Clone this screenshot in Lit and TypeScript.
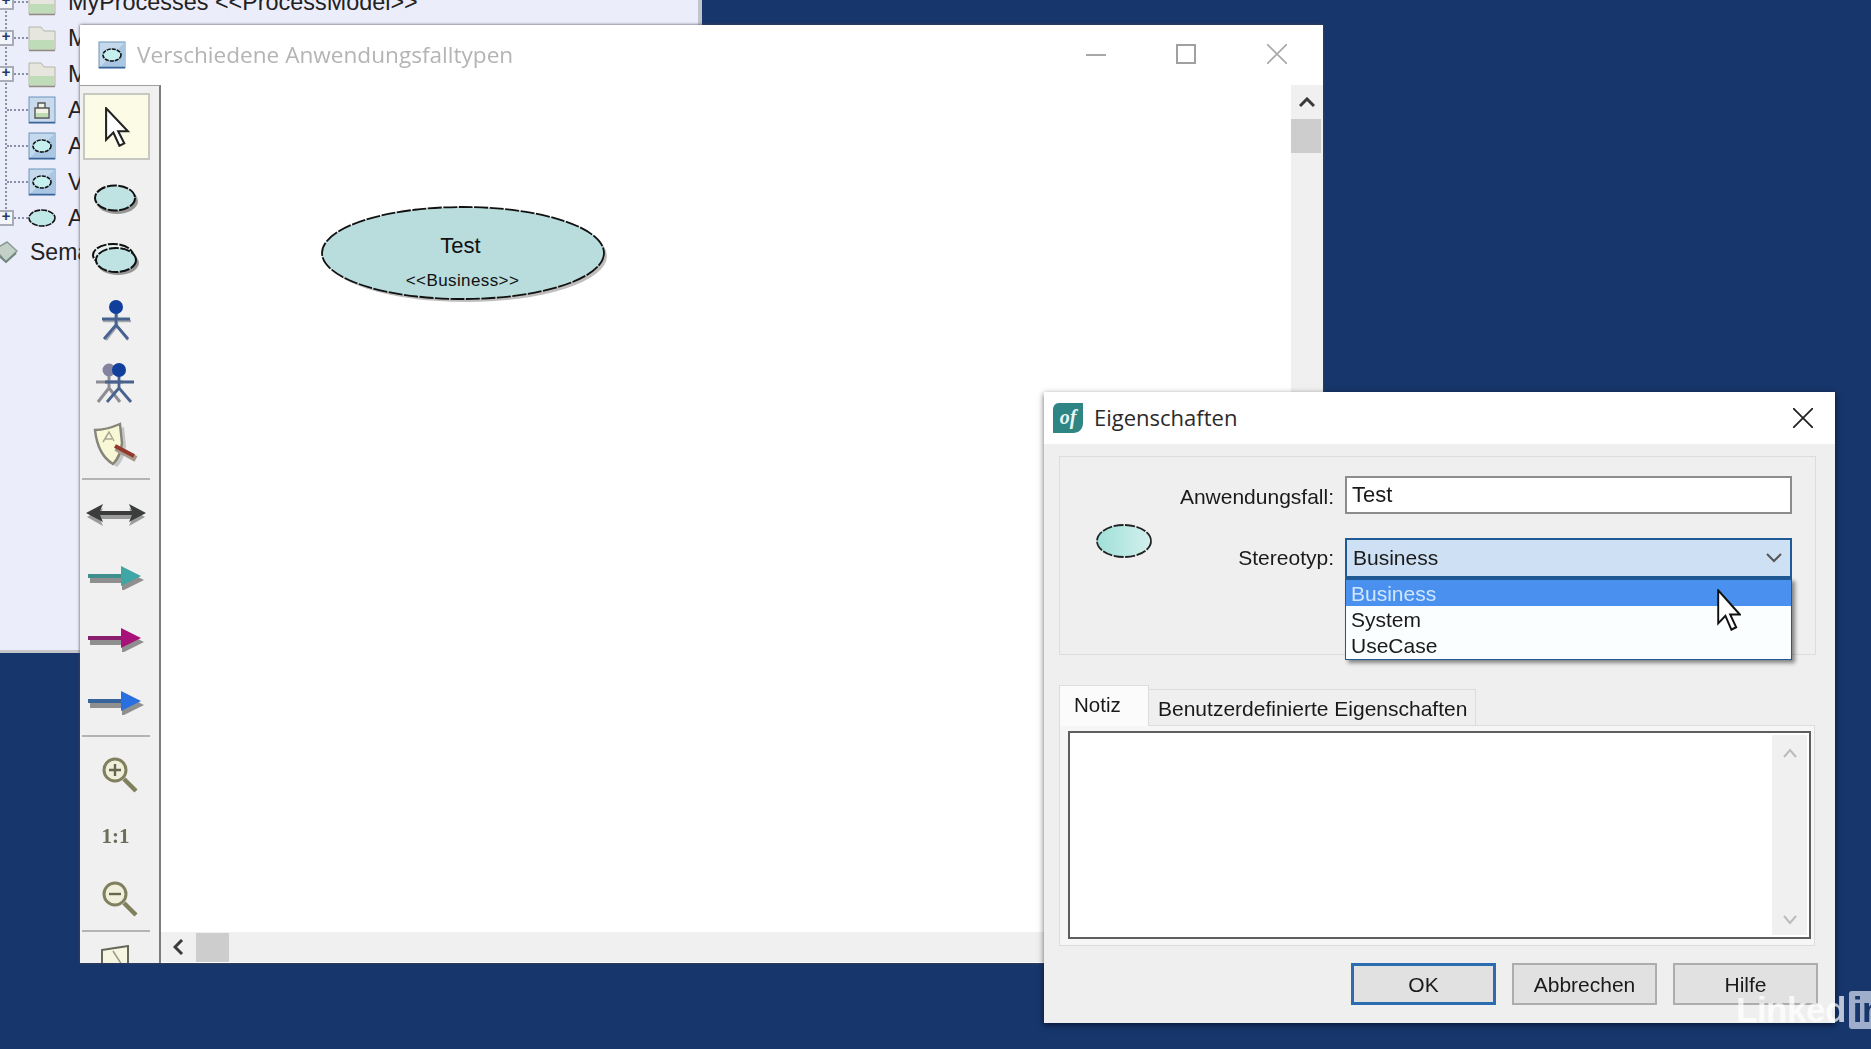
import { LitElement, html, css, svg } from 'lit'
import { customElement } from 'lit/decorators.js'

// small blue tile with an ellipse, used by the tree and the title bar
const tile = svg`<svg width="28" height="28" viewBox="0 0 28 28">
  <rect x="1" y="1" width="26" height="26" fill="#c4d9ec" stroke="#6b93ba"/>
  <path d="M1 27L27 1v26z" fill="#a9c6e2"/>
  <path d="M1 26.5h26" stroke="#39629a" stroke-width="1.5"/>
  <ellipse cx="14" cy="14" rx="9" ry="6" fill="#c6f0f0" stroke="#111" stroke-width="1.6" stroke-dasharray="4 1"/>
</svg>`

const folder = svg`<svg width="28" height="28" viewBox="0 0 28 28">
  <path d="M1 26V3h12l3 4h11v19z" fill="#e6e6de" stroke="#b4b4a8"/>
  <rect x="2" y="16" width="24" height="9" fill="#bfdcb8"/>
  <path d="M1 26.5h26" stroke="#8c8c80" stroke-width="1.5"/>
</svg>`

const lockTile = svg`<svg width="28" height="28" viewBox="0 0 28 28">
  <rect x="1" y="1" width="26" height="26" fill="#c8daec" stroke="#6b93ba"/>
  <path d="M1 26.5h26" stroke="#39629a" stroke-width="1.5"/>
  <path d="M7 22V12h14v10zM10 12V7h7v5" fill="#f2f2e4" stroke="#555" stroke-width="1.4"/>
  <rect x="8" y="17" width="12" height="4" fill="#bfdcb0"/>
</svg>`

const tinyEllipse = svg`<svg width="28" height="24" viewBox="0 0 28 24">
  <ellipse cx="14" cy="12" rx="13" ry="8" fill="#bfe8e6" stroke="#111" stroke-width="1.6" stroke-dasharray="6 1"/>
</svg>`

const treeRows = [
  { plus: true, icon: folder, label: 'MyProcesses <<ProcessModel>>' },
  { plus: true, icon: folder, label: 'MyPackage' },
  { plus: true, icon: folder, label: 'Modelle' },
  { plus: false, icon: lockTile, label: 'Analyse' },
  { plus: false, icon: tile, label: 'Anwendungsfall' },
  { plus: false, icon: tile, label: 'Verschiedene' },
  { plus: true, icon: tinyEllipse, label: 'Anmelden' },
]

const ellipseIcon = svg`<svg width="48" height="34" viewBox="0 0 48 34">
  <ellipse cx="25" cy="18" rx="21" ry="13" fill="#666" opacity=".65"/>
  <ellipse cx="23" cy="15" rx="20" ry="12.5" fill="#bfe3e3" stroke="#111" stroke-width="2" stroke-dasharray="10 1.5"/>
</svg>`

const doubleEllipseIcon = svg`<svg width="50" height="36" viewBox="0 0 50 36">
  <ellipse cx="22" cy="13" rx="20" ry="11" fill="#e8f2f2" stroke="#111" stroke-width="2" stroke-dasharray="10 1.5"/>
  <ellipse cx="27" cy="21" rx="21" ry="12" fill="#666" opacity=".65"/>
  <ellipse cx="25" cy="18" rx="20" ry="12" fill="#bfe3e3" stroke="#111" stroke-width="2" stroke-dasharray="10 1.5"/>
</svg>`

const actorIcon = svg`<svg width="32" height="42" viewBox="0 0 32 42" fill="none">
  <path d="M17 14v13M3 22h28M17 27L6 41M17 27l11 14" stroke="#a4a6ae" stroke-width="2.4"/>
  <path d="M16 12v14M2 20h28M16 26L4 40M16 26l12 14" stroke="#47628e" stroke-width="2.8"/>
  <circle cx="16" cy="8" r="7" fill="#123f9c"/>
</svg>`

const doubleActorIcon = svg`<svg width="42" height="42" viewBox="0 0 42 42" fill="none">
  <path d="M14 12v14M1 20h27M14 26L3 40M14 26l11 14" stroke="#8d8d96" stroke-width="3"/>
  <circle cx="14" cy="8" r="6.5" fill="#8484a0"/>
  <path d="M24 12v14M10 20h29M24 26L12 40M24 26l12 14" stroke="#47628e" stroke-width="2.8"/>
  <circle cx="24" cy="8" r="7" fill="#123f9c"/>
</svg>`

const shieldIcon = svg`<svg width="46" height="46" viewBox="0 0 46 46" fill="none">
  <path d="M4 10c9 0 18-3 25-6l2 19c-1 9-4 16-9 21C12 38 6 28 4 10z" fill="#999" opacity=".5" transform="translate(2 1)"/>
  <path d="M2 8c9 0 18-3 25-6l2 19c-1 9-4 16-9 21C10 36 4 26 2 8z" fill="#f8f7d6" stroke="#85857a" stroke-width="2.4"/>
  <path d="M10 20l6-10 5 9M12 17h7" stroke="#a8a892" stroke-width="1.5"/>
  <path d="M23 26l20 11" stroke="#a79a8c" stroke-width="6"/>
  <path d="M22 24l19 10" stroke="#93382d" stroke-width="4"/>
</svg>`

const doubleArrow = svg`<svg width="62" height="26" viewBox="0 0 62 26">
  <path d="M2 14L18 5l-3 7h32l-3-7 16 9-16 9 3-7H15l3 7z" fill="#9a9a9a" transform="translate(0 2)"/>
  <path d="M1 12L18 3l-3 7h32l-3-7 17 9-17 9 3-7H15l3 7z" fill="#3b3d3d"/>
</svg>`

function arrow(color: string, line: string) {
  return svg`<svg width="58" height="26" viewBox="0 0 58 26">
    <path d="M2 14h32V5l22 11-22 11v-8H2z" fill="#8f8f8f" transform="translate(1 0)"/>
    <path d="M1 10h33V2l20 10-20 10v-8H1z" fill="${color}"/>
    <path d="M1 10h33v4H1z" fill="${line}"/>
  </svg>`
}

function magnifier(minus: boolean) {
  return svg`<svg width="36" height="37" viewBox="0 0 36 37" fill="none">
    <path d="M22 22l12 12" stroke="#80805f" stroke-width="4.5"/>
    <circle cx="13" cy="13" r="11" fill="#efefdc" stroke="#80805f" stroke-width="3"/>
    <path d="M7 13h12${minus ? '' : 'M13 7v12'}" stroke="#66664e" stroke-width="2.4"/>
  </svg>`
}

const noteIcon = svg`<svg width="30" height="22" viewBox="0 0 30 22" fill="none">
  <path d="M1 5l26-4v22H1z" fill="#f6f5e2" stroke="#66665a" stroke-width="2"/>
  <path d="M12 6l9 14" stroke="#99998a" stroke-width="1.5"/>
</svg>`

const cursorPath = 'M1 1v26l6-6 5 11 4-2-5-10h8z'

@customElement('app-root')
export class AppRoot extends LitElement {
  static styles = css`
    :host {
      display: block;
      width: 1871px;
      height: 1049px;
      overflow: hidden;
      background: #17366b;
      font-family: "Liberation Sans", Arial, sans-serif;
    }
    .desktop {
      position: relative;
      width: 1871px;
      height: 1049px;
      overflow: hidden;
      filter: blur(0.6px);
    }

    /* windows sit on a free desktop, so they are the absolutely placed bits */
    .back {
      position: absolute;
      left: 0;
      top: -15px;
      width: 702px;
      height: 668px;
      background: #ecedfa;
      border-right: 4px solid #c2c4cc;
      border-bottom: 3px solid #c4c6cc;
      box-sizing: border-box;
      overflow: hidden;
    }
    .tree {
      display: flex;
      flex-direction: column;
      gap: 8px;
      margin: 3px 0 0 -12px;
      position: relative;
    }
    .tree::before {
      content: '';
      position: absolute;
      left: 17px;
      top: 0;
      height: 225px;
      border-left: 2px dotted #8a8fa8;
    }
    .tree-row {
      display: flex;
      align-items: center;
      height: 28px;
      font-size: 23.4px;
      color: #222;
      white-space: nowrap;
      position: relative;
    }
    .plus {
      width: 16px;
      height: 16px;
      margin-left: 10px;
      border: 2px solid #a8abb8;
      background: #f4f5fb;
      box-sizing: border-box;
      font: bold 15px/12px "Liberation Mono", monospace;
      text-align: center;
      color: #223a6a;
      flex: none;
    }
    .noplus { width: 8px; margin-left: 11px; flex: none; }
    .dots { flex: none; width: 14px; border-top: 2px dotted #8a8fa8; }
    .noplus + .dots { width: 21px; }
    .tree-row svg { margin-right: 12px; flex: none; }
    .sem {
      display: flex;
      align-items: center;
      gap: 12px;
      height: 28px;
      font-size: 23px;
      color: #222;
      margin: 6px 0 0 -6px;
    }

    .main {
      position: absolute;
      left: 80px;
      top: 25px;
      width: 1243px;
      height: 938px;
      background: #fff;
      display: flex;
      flex-direction: column;
      box-shadow: 0 0 3px #445;
    }
    .main-title {
      height: 60px;
      flex: none;
      display: flex;
      align-items: center;
      padding: 0 0 0 18px;
      gap: 11px;
      color: #b4b4b4;
      font: 22.6px "Open Sans", sans-serif;
      box-sizing: border-box;
    }
    .main-title .name { flex: 1; margin-top: -2px; }
    .win-btns { display: flex; align-items: center; margin: -2px 36px 0 0; }
    .win-btns svg { display: block; }
    .min { margin-right: 70px; }
    .max { margin-right: 71px; }
    .main-body { flex: 1; display: flex; min-height: 0; }
    .toolbar {
      width: 81px;
      flex: none;
      background: #f0f0f0;
      border-right: 2px solid #7d7d7d;
      border-top: 1px solid #a0a0a0;
      box-sizing: border-box;
      display: flex;
      flex-direction: column;
      align-items: center;
      padding-right: 8px;
      overflow: hidden;
    }
    .toolbar > * { flex: none; }
    .tool-sel {
      width: 67px;
      height: 67px;
      margin-top: 7px;
      align-self: flex-start;
      margin-left: 3px;
      background: #fbfbe6;
      border: 2px solid #c8c8c2;
      box-sizing: border-box;
      display: flex;
      align-items: center;
      justify-content: center;
    }
    .toolbar svg { display: block; }
    .t-ellipse { margin-top: 23px; }
    .t-double { margin-top: 25px; }
    .t-actor { margin-top: 21px; }
    .t-actors { margin-top: 21px; }
    .t-shield { margin-top: 18px; }
    .t-assoc { margin-top: 21px; }
    .t-teal { margin-top: 37px; }
    .t-magenta { margin-top: 36px; }
    .t-blue { margin-top: 37px; }
    .t-zoomin { margin: 20px 0 0 9px; }
    .t-zoomout { margin: 34px 0 0 9px; }
    .t-note { margin-top: 13px; }
    .sep { width: 68px; border-top: 2px solid #b4b4b4; }
    .sep-a { margin-top: 10px; }
    .sep-b { margin-top: 20px; }
    .sep-c { margin-top: 12px; }
    .one {
      margin-top: 31px;
      height: 22px;
      font: bold 21px/22px "Liberation Serif", serif;
      color: #6d6d58;
    }
    .canvas-col { flex: 1; display: flex; flex-direction: column; min-width: 0; }
    .canvas-row { flex: 1; display: flex; min-height: 0; }
    .canvas { flex: 1; position: relative; background: #fff; }
    .usecase {
      position: absolute;
      left: 160px;
      top: 121px;
      width: 283px;
      height: 93px;
    }
    .usecase svg { display: block; }
    .uc-text {
      position: absolute;
      inset: 0;
      display: flex;
      flex-direction: column;
      align-items: center;
      color: #111;
    }
    .uc-name { font-size: 22px; margin: 27px 4px 0 0; line-height: 26px; }
    .uc-st { font-size: 17px; margin-top: 12px; letter-spacing: 0.4px; line-height: 20px; }
    .vbar {
      width: 32px;
      background: #f0f0f0;
      flex: none;
      display: flex;
      flex-direction: column;
      align-items: center;
    }
    .vbar .up { height: 34px; display: flex; align-items: center; }
    .vthumb { width: 30px; height: 34px; background: #cdcdcd; margin-right: 2px; }
    .hbar {
      height: 30px;
      margin-bottom: 1px;
      background: #f0f0f0;
      display: flex;
      align-items: center;
      flex: none;
    }
    .hbar .left { width: 35px; display: flex; justify-content: center; }
    .hthumb { width: 33px; height: 29px; background: #cdcdcd; }

    /* dialog */
    .dialog {
      position: absolute;
      left: 1044px;
      top: 392px;
      width: 791px;
      height: 631px;
      background: #efefef;
      box-shadow: 0 2px 6px rgba(0, 0, 20, 0.6);
      display: flex;
      flex-direction: column;
      font-size: 21px;
      color: #1a1a1a;
    }
    .dlg-title {
      height: 52px;
      flex: none;
      background: #fff;
      display: flex;
      align-items: center;
      padding: 0 22px 0 8px;
      gap: 10px;
      font: 22px "Open Sans", sans-serif;
      color: #2a2a2a;
    }
    .dlg-title .name { flex: 1; margin-top: -3px; }
    .group {
      margin: 12px 19px 0 15px;
      height: 199px;
      flex: none;
      border: 1px solid #dcdcdc;
      box-sizing: border-box;
      position: relative;
      display: grid;
      grid-template-columns: 274px 447px;
      grid-template-rows: 38px 40px;
      row-gap: 24px;
      padding-top: 19px;
      column-gap: 11px;
    }
    .oval { position: absolute; left: 35px; top: 66px; }
    .lbl { text-align: right; align-self: center; }
    .lbl.first { margin-top: 3px; }
    .input {
      border: 2px solid #8c8c8c;
      background: #fff;
      box-sizing: border-box;
      font-size: 22px;
      padding: 2px 0 0 5px;
      line-height: 30px;
    }
    .combo {
      border: 2px solid #1f5a96;
      background: #cde0f4;
      box-sizing: border-box;
      display: flex;
      align-items: center;
      justify-content: space-between;
      padding: 0 8px 0 6px;
    }
    .dropdown {
      position: absolute;
      left: 285px;
      top: 121px;
      width: 447px;
      height: 82px;
      background: #fbfeff;
      border: 1px solid #1f5a96;
      border-top: 2px solid #1f5a96;
      box-sizing: border-box;
      box-shadow: 3px 3px 4px rgba(0, 0, 0, 0.45);
      z-index: 2;
      display: flex;
      flex-direction: column;
    }
    .opt { height: 26px; line-height: 28px; padding-left: 5px; flex: none; }
    .opt.on { background: #4a90ef; color: #cfe6ff; }
    .cursor { position: absolute; left: 371px; top: 9px; z-index: 3; }

    .tabs {
      margin: 30px 0 0 15px;
      display: flex;
      align-items: flex-end;
      height: 40px;
      flex: none;
      position: relative;
      z-index: 1;
    }
    .tab-on {
      width: 90px;
      height: 41px;
      margin-bottom: -1px;
      background: #fbfbfb;
      border: 1px solid #dcdcdc;
      border-bottom: none;
      box-sizing: border-box;
      padding: 7px 0 0 14px;
      font-size: 20.5px;
    }
    .tab {
      width: 327px;
      height: 36px;
      border: 1px solid #dcdcdc;
      border-bottom: none;
      border-left: none;
      box-sizing: border-box;
      padding: 7px 0 0 9px;
      white-space: nowrap;
    }
    .pane {
      margin: 0 20px 0 15px;
      height: 221px;
      flex: none;
      background: #f6f6f6;
      border: 1px solid #dcdcdc;
      box-sizing: border-box;
      padding: 5px 3px 6px 8px;
      display: flex;
    }
    .note {
      flex: 1;
      background: #fff;
      border: 2px solid #5e5e5e;
      box-sizing: border-box;
      display: flex;
      justify-content: flex-end;
      padding: 2px;
    }
    .note-bar {
      width: 35px;
      background: #f0f0f0;
      display: flex;
      flex-direction: column;
      align-items: center;
      justify-content: space-between;
      padding: 13px 0 10px;
      box-sizing: border-box;
    }
    .btns {
      display: flex;
      gap: 16px;
      margin: 17px 17px 0 auto;
    }
    .btn {
      width: 145px;
      height: 42px;
      padding-top: 2px;
      background: #e1e1e1;
      border: 2px solid #adadad;
      box-sizing: border-box;
      display: flex;
      align-items: center;
      justify-content: center;
    }
    .btn.def { border: 3px solid #2c6cb0; }

    .linked {
      position: absolute;
      left: 1736px;
      top: 990px;
      display: flex;
      align-items: center;
      gap: 3px;
      color: rgba(255, 255, 255, 0.72);
      font-size: 35px;
      font-weight: bold;
      letter-spacing: -0.5px;
    }
    .in {
      background: rgba(205, 215, 235, 0.75);
      color: #17366b;
      border-radius: 3px;
      padding: 0 4px;
      line-height: 38px;
    }
  `

  render() {
    return html`
      <div class="desktop">
        <div class="back">
          <div class="tree">
            ${treeRows.map(r => html`
              <div class="tree-row">
                ${r.plus ? html`<div class="plus">+</div>` : html`<div class="noplus"></div>`}
                <div class="dots"></div>
                ${r.icon}
                <span>${r.label}</span>
              </div>`)}
          </div>
          <div class="sem">
            <svg width="24" height="24" viewBox="0 0 24 24">
              <path d="M1 9l12-7 10 9-11 11z" fill="#c3d0c8" stroke="#8c9a94" stroke-width="1.5"/>
              <path d="M2 13l10 9 10-9" fill="none" stroke="#6f8a80" stroke-width="2"/>
            </svg>
            <span>Semantik</span>
          </div>
        </div>

        <div class="main">
          <div class="main-title">
            ${tile}
            <span class="name">Verschiedene Anwendungsfalltypen</span>
            <div class="win-btns">
              <svg class="min" width="20" height="20" viewBox="0 0 20 20"><path d="M0 11h20" stroke="#a8a8a8" stroke-width="2"/></svg>
              <svg class="max" width="20" height="20" viewBox="0 0 20 20"><rect x="1" y="1" width="18" height="18" fill="none" stroke="#a0a0a0" stroke-width="2"/></svg>
              <svg width="20" height="20" viewBox="0 0 20 20"><path d="M0 0l20 20M20 0L0 20" stroke="#a8a8a8" stroke-width="1.6"/></svg>
            </div>
          </div>
          <div class="main-body">
            <div class="toolbar">
              <div class="tool-sel">
                <svg width="26" height="40" viewBox="0 0 20 33"><path d="${cursorPath}" fill="#fff" stroke="#222" stroke-width="1.7"/></svg>
              </div>
              <div class="t-ellipse">${ellipseIcon}</div>
              <div class="t-double">${doubleEllipseIcon}</div>
              <div class="t-actor">${actorIcon}</div>
              <div class="t-actors">${doubleActorIcon}</div>
              <div class="t-shield">${shieldIcon}</div>
              <div class="sep sep-a"></div>
              <div class="t-assoc">${doubleArrow}</div>
              <div class="t-teal">${arrow('#3fa5a5', '#3f8f8f')}</div>
              <div class="t-magenta">${arrow('#a8107a', '#8a1f6e')}</div>
              <div class="t-blue">${arrow('#2a6fe0', '#38649c')}</div>
              <div class="sep sep-b"></div>
              <div class="t-zoomin">${magnifier(false)}</div>
              <div class="one">1:1</div>
              <div class="t-zoomout">${magnifier(true)}</div>
              <div class="sep sep-c"></div>
              <div class="t-note">${noteIcon}</div>
            </div>
            <div class="canvas-col">
              <div class="canvas-row">
                <div class="canvas">
                  <div class="usecase">
                    <svg width="292" height="100" viewBox="0 0 292 100">
                      <ellipse cx="145" cy="50" rx="141" ry="46" fill="#888" opacity=".55"/>
                      <ellipse cx="142" cy="47" rx="141" ry="46" fill="#b9dcdc" stroke="#111" stroke-width="1.8" stroke-dasharray="14 1.5"/>
                    </svg>
                    <div class="uc-text">
                      <span class="uc-name">Test</span>
                      <span class="uc-st">&lt;&lt;Business&gt;&gt;</span>
                    </div>
                  </div>
                </div>
                <div class="vbar">
                  <div class="up">
                    <svg width="16" height="11" viewBox="0 0 16 11"><path d="M1 9l7-7 7 7" fill="none" stroke="#3a3a3a" stroke-width="3"/></svg>
                  </div>
                  <div class="vthumb"></div>
                </div>
              </div>
              <div class="hbar">
                <div class="left">
                  <svg width="11" height="16" viewBox="0 0 11 16"><path d="M9 1L2 8l7 7" fill="none" stroke="#3a3a3a" stroke-width="3"/></svg>
                </div>
                <div class="hthumb"></div>
              </div>
            </div>
          </div>
        </div>

        <div class="dialog">
          <div class="dlg-title">
            <svg width="32" height="32" viewBox="0 0 32 32">
              <path d="M7 1h24v20c0 6-4 10-10 10H1V8c0-4 2-7 6-7z" fill="#2f8583"/>
              <text x="16" y="22" text-anchor="middle" fill="#e8f6f5" font-family="Liberation Serif, serif" font-style="italic" font-weight="bold" font-size="20">of</text>
            </svg>
            <span class="name">Eigenschaften</span>
            <svg width="20" height="20" viewBox="0 0 20 20"><path d="M0 0l20 20M20 0L0 20" stroke="#222" stroke-width="1.8"/></svg>
          </div>
          <div class="group">
            <svg class="oval" width="58" height="36" viewBox="0 0 58 36">
              <defs>
                <linearGradient id="ov" x1="0" x2="1" y1="0" y2="0">
                  <stop offset="0" stop-color="#9fe0d8"/><stop offset="1" stop-color="#d4f0ee"/>
                </linearGradient>
              </defs>
              <ellipse cx="29" cy="18" rx="27" ry="16" fill="url(#ov)" stroke="#222" stroke-width="1.8" stroke-dasharray="10 1.5"/>
            </svg>
            <div class="lbl first">Anwendungsfall:</div>
            <div class="input">Test</div>
            <div class="lbl">Stereotyp:</div>
            <div class="combo">
              <span>Business</span>
              <svg width="16" height="10" viewBox="0 0 16 10"><path d="M1 1l7 7 7-7" fill="none" stroke="#555" stroke-width="2"/></svg>
            </div>
            <div class="dropdown">
              <div class="opt on">Business</div>
              <div class="opt">System</div>
              <div class="opt">UseCase</div>
              <svg class="cursor" width="24" height="42" viewBox="0 0 20 33" preserveAspectRatio="none"><path d="${cursorPath}" fill="#fff" stroke="#111" stroke-width="1.6"/></svg>
            </div>
          </div>
          <div class="tabs">
            <div class="tab-on">Notiz</div>
            <div class="tab">Benutzerdefinierte Eigenschaften</div>
          </div>
          <div class="pane">
            <div class="note">
              <div class="note-bar">
                <svg width="14" height="10" viewBox="0 0 14 10"><path d="M1 9l6-7 6 7" fill="none" stroke="#bbb" stroke-width="2"/></svg>
                <svg width="14" height="10" viewBox="0 0 14 10"><path d="M1 1l6 7 6-7" fill="none" stroke="#bbb" stroke-width="2"/></svg>
              </div>
            </div>
          </div>
          <div class="btns">
            <div class="btn def">OK</div>
            <div class="btn">Abbrechen</div>
            <div class="btn">Hilfe</div>
          </div>
        </div>

        <div class="linked"><span>Linked</span><span class="in">in</span></div>
      </div>
    `
  }
}
